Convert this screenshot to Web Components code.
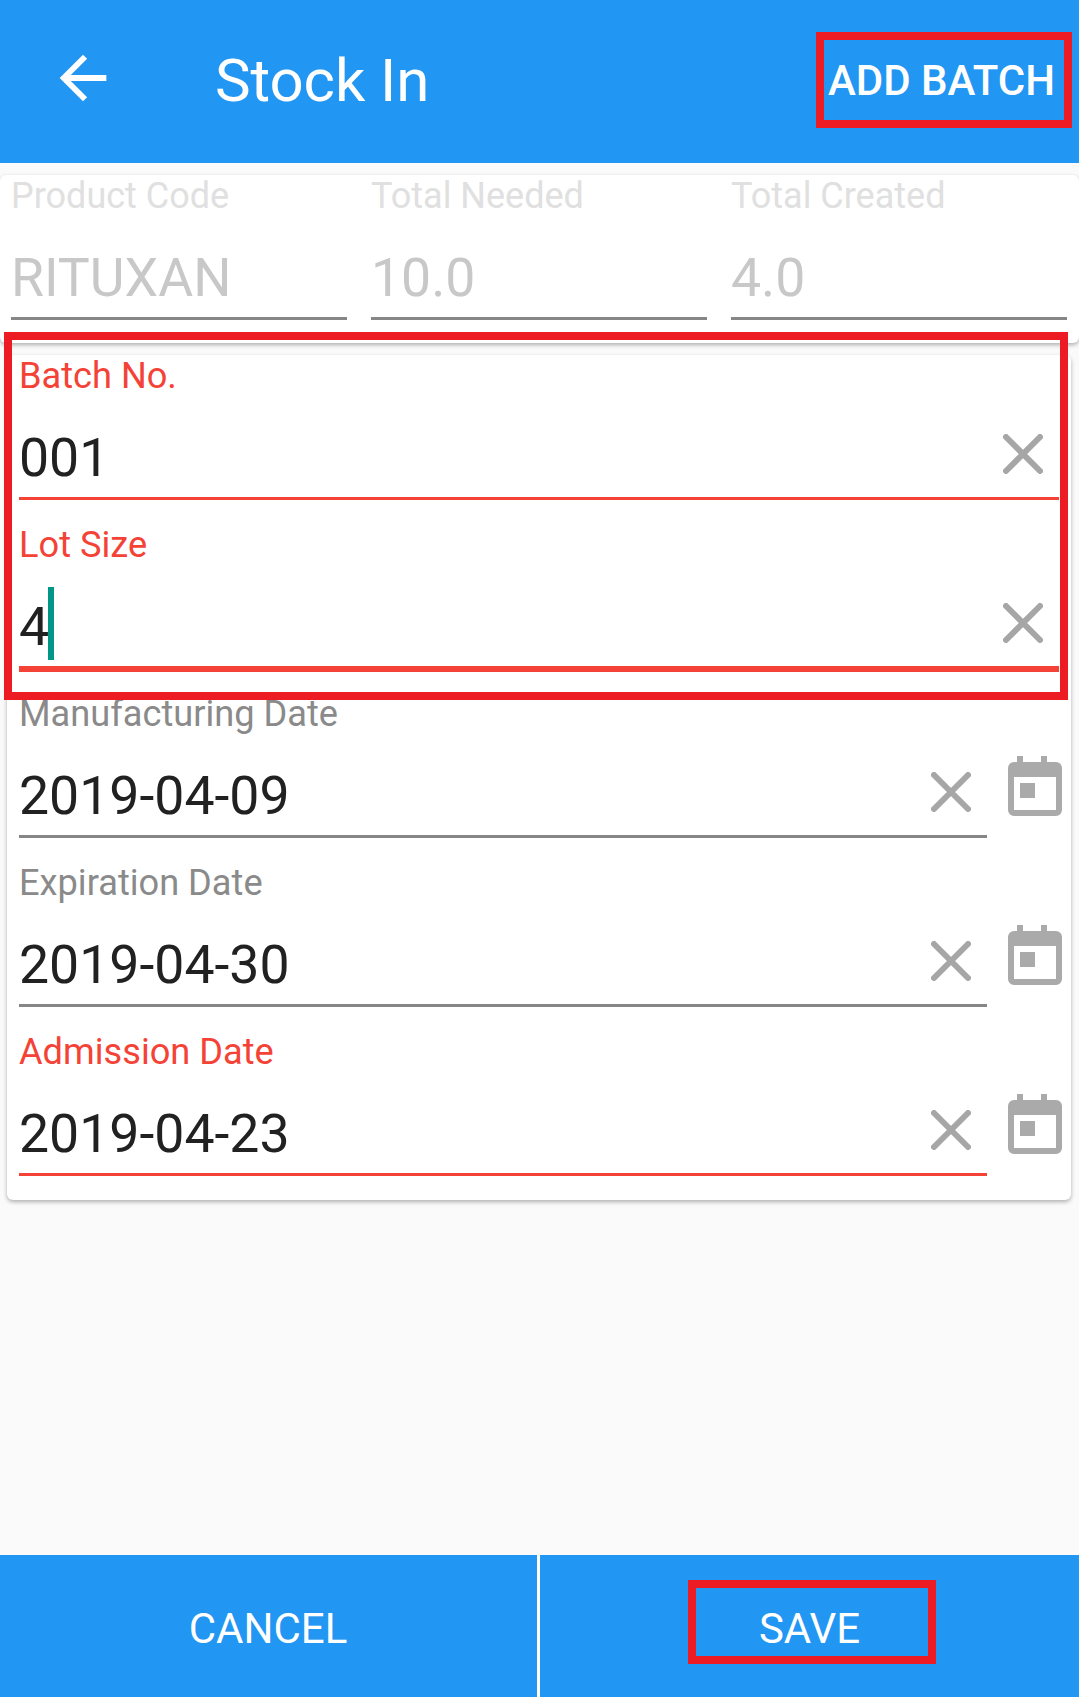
<!DOCTYPE html>
<html lang="en">
<head>
<meta charset="utf-8">
<title>Stock In</title>
<style>
  html, body { margin: 0; height: 100%; }
  body {
    background: #fafafa;
    font-family: Roboto, "Liberation Sans", sans-serif;
  }
</style>
</head>
<body>
<stock-page>
  <app-bar slot="bar" action="ADD BATCH">Stock In</app-bar>

  <info-card>
    <text-field disabled><span slot="label">Product Code</span>RITUXAN</text-field>
    <text-field disabled><span slot="label">Total Needed</span>10.0</text-field>
    <text-field disabled><span slot="label">Total Created</span>4.0</text-field>
  </info-card>

  <form-card>
    <mark-box>
      <text-field error clearable><span slot="label">Batch No.</span>001</text-field>
      <text-field error clearable focused><span slot="label">Lot Size</span>4</text-field>
    </mark-box>
    <date-row>
      <text-field clearable><span slot="label">Manufacturing Date</span>2019-04-09</text-field>
    </date-row>
    <date-row>
      <text-field clearable><span slot="label">Expiration Date</span>2019-04-30</text-field>
    </date-row>
    <date-row>
      <text-field error clearable><span slot="label">Admission Date</span>2019-04-23</text-field>
    </date-row>
  </form-card>

  <action-button slot="footer">CANCEL</action-button>
  <action-button slot="footer" marked>SAVE</action-button>
</stock-page>

<script>
// page frame: bar on top, cards in the middle, buttons at the bottom
class StockPage extends HTMLElement {
  constructor() {
    super()
    this.attachShadow({ mode: 'open' })
    this.shadowRoot.innerHTML = `
      <style>
        :host {
          display: flex;
          flex-direction: column;
          height: 1697px;
        }
        main {
          flex: 1;
          display: flex;
          flex-direction: column;
          gap: 12px;
          padding-top: 12px;
        }
        footer {
          display: flex;
          height: 142px;
          background: #2196f3;
        }
      </style>
      <slot name="bar"></slot>
      <main><slot></slot></main>
      <footer><slot name="footer"></slot></footer>
    `
  }
}

class AppBar extends HTMLElement {
  constructor() {
    super()
    this.attachShadow({ mode: 'open' })
    this.shadowRoot.innerHTML = `
      <style>
        :host {
          display: flex;
          align-items: flex-start;
          height: 163px;
          background: #2196f3;
          color: #fff;
        }
        svg {
          width: 70px;
          height: 70px;
          margin: 43px 0 0 48px;
          fill: #fff;
          flex: none;
        }
        .title {
          flex: 1;
          margin: 46px 0 0 97px;
          font-size: 60px;
          line-height: 70px;
          letter-spacing: -0.1px;
        }
        .action {
          box-sizing: border-box;
          width: 256px;
          height: 96px;
          margin: 32px 7px 0 0;
          padding-right: 5px;
          border: 8px solid #ed1c24;
          display: flex;
          align-items: center;
          justify-content: center;
          font-size: 42px;
          font-weight: 500;
          white-space: nowrap;
        }
      </style>
      <svg viewBox="0 0 24 24"><path d="M20 11H7.83l5.59-5.59L12 4l-8 8 8 8 1.41-1.41L7.83 13H20v-2z"/></svg>
      <div class="title"><slot></slot></div>
      <div class="action"></div>
    `
  }

  connectedCallback() {
    this.shadowRoot.querySelector('.action').textContent = this.getAttribute('action')
  }
}

class InfoCard extends HTMLElement {
  constructor() {
    super()
    this.attachShadow({ mode: 'open' })
    this.shadowRoot.innerHTML = `
      <style>
        :host {
          display: grid;
          grid-template-columns: repeat(3, 1fr);
          column-gap: 24px;
          padding: 0 12px 23px 11px;
          background: #fff;
          border-radius: 6px;
          box-shadow: 0 2px 4px rgba(0,0,0,0.3);
        }
      </style>
      <slot></slot>
    `
  }
}

class FormCard extends HTMLElement {
  constructor() {
    super()
    this.attachShadow({ mode: 'open' })
    this.shadowRoot.innerHTML = `
      <style>
        :host {
          display: flex;
          flex-direction: column;
          gap: 24px;
          margin: 0 8px 0 7px;
          padding: 0 12px 24px;
          background: #fff;
          border-radius: 6px;
          box-shadow: 0 2px 4px rgba(0,0,0,0.3);
        }
      </style>
      <slot></slot>
    `
  }
}

// red annotation drawn around a group of fields
class MarkBox extends HTMLElement {
  constructor() {
    super()
    this.attachShadow({ mode: 'open' })
    this.shadowRoot.innerHTML = `
      <style>
        :host {
          display: flex;
          flex-direction: column;
          gap: 24px;
          position: relative;
        }
        .mark {
          position: absolute;
          left: -15px;
          right: -9px;
          top: -23px;
          bottom: -31px;
          border: 8px solid #ed1c24;
          pointer-events: none;
        }
      </style>
      <slot></slot>
      <div class="mark"></div>
    `
  }
}

class TextField extends HTMLElement {
  constructor() {
    super()
    this.attachShadow({ mode: 'open' })
    this.shadowRoot.innerHTML = `
      <style>
        :host {
          display: block;
          box-sizing: border-box;
          height: 145px;
          min-width: 0;
          border-bottom: 3px solid #868686;
          color: #212121;
        }
        :host([error]) { border-bottom-color: #f44336; }
        :host([focused]) {
          height: 148px;
          margin-bottom: -3px;
          border-bottom-width: 6px;
        }
        .label {
          font-size: 36.2px;
          line-height: 42px;
          color: #8a8a8a;
          white-space: nowrap;
        }
        :host([error]) .label { color: #f44336; }
        :host([disabled]) .label { color: #e0e0e0; font-size: 36px; }
        .row {
          display: flex;
          align-items: flex-start;
          justify-content: space-between;
          margin-top: 31px;
          height: 60px;
        }
        .value {
          position: relative;
          font-size: 53.6px;
          line-height: 60px;
          white-space: nowrap;
        }
        :host([disabled]) .value { color: #c8c8c8; }
        .caret {
          display: none;
          position: absolute;
          left: 100%;
          top: -10px;
          margin-left: -1px;
          width: 6px;
          height: 73px;
          background: #009688;
        }
        :host([focused]) .caret { display: block; }
        svg {
          display: none;
          width: 40px;
          height: 40px;
          margin: 6px 16px 0 0;
          flex: none;
          stroke: #a6a6a6;
          stroke-width: 6;
          stroke-linecap: round;
        }
        :host([clearable]) svg { display: block; }
      </style>
      <div class="label"><slot name="label"></slot></div>
      <div class="row">
        <span class="value"><slot></slot><i class="caret"></i></span>
        <svg viewBox="0 0 40 40"><path d="M3 3L37 37M37 3L3 37"/></svg>
      </div>
    `
  }
}

class DateRow extends HTMLElement {
  constructor() {
    super()
    this.attachShadow({ mode: 'open' })
    this.shadowRoot.innerHTML = `
      <style>
        :host {
          display: flex;
          align-items: flex-start;
          gap: 21px;
        }
        ::slotted(text-field) { flex: 1; }
        svg {
          width: 54px;
          height: 60px;
          margin: 63px -3px 0 0;
          flex: none;
          fill: #aaa;
        }
      </style>
      <slot></slot>
      <svg viewBox="0 0 54 60">
        <path fill-rule="evenodd" d="M9 0h6v6h18V0h6v6h9a6 6 0 0 1 6 6v42a6 6 0 0 1-6 6H6a6 6 0 0 1-6-6V12a6 6 0 0 1 6-6h3zM6 21v33h42V21z"/>
        <rect x="12" y="27" width="15" height="15"/>
      </svg>
    `
  }
}

class ActionButton extends HTMLElement {
  constructor() {
    super()
    this.attachShadow({ mode: 'open' })
    this.shadowRoot.innerHTML = `
      <style>
        :host {
          flex: 1;
          display: flex;
          align-items: center;
          justify-content: center;
          position: relative;
          box-sizing: border-box;
          padding-top: 4px;
          color: #fff;
          font-size: 42px;
        }
        :host(:first-of-type) { flex: 0 0 536px; }
        :host(:not(:first-of-type)) { border-left: 3px solid #fff; margin-left: 1px; }
        .mark {
          display: none;
          position: absolute;
          left: 148px;
          top: 25px;
          width: 248px;
          height: 84px;
          box-sizing: border-box;
          border: 8px solid #ed1c24;
        }
        :host([marked]) .mark { display: block; }
      </style>
      <slot></slot>
      <div class="mark"></div>
    `
  }
}

customElements.define('stock-page', StockPage)
customElements.define('app-bar', AppBar)
customElements.define('info-card', InfoCard)
customElements.define('form-card', FormCard)
customElements.define('mark-box', MarkBox)
customElements.define('text-field', TextField)
customElements.define('date-row', DateRow)
customElements.define('action-button', ActionButton)
</script>
</body>
</html>
